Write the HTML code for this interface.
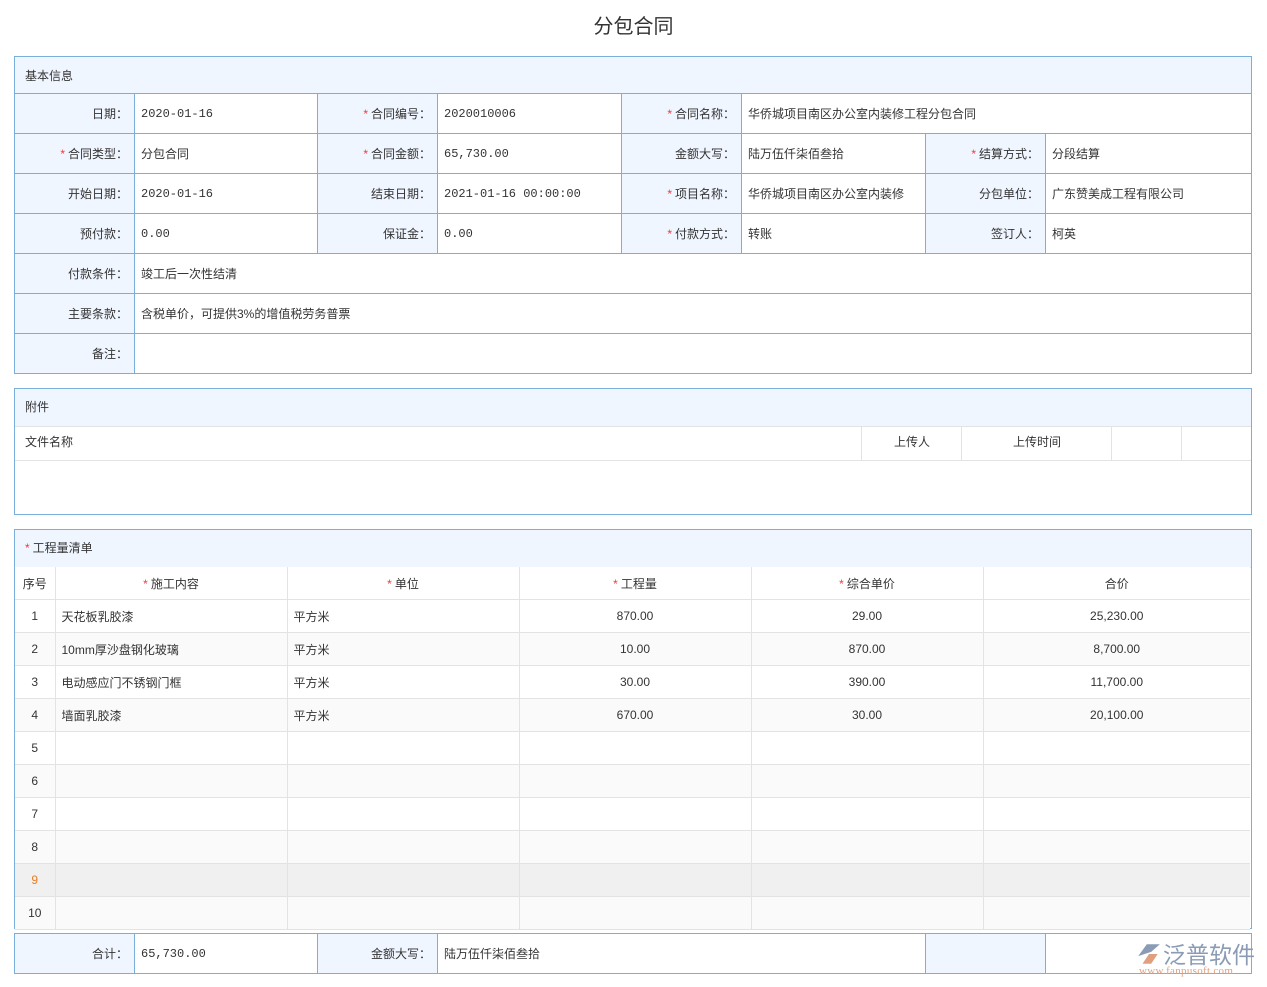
<!DOCTYPE html>
<html><head><meta charset="utf-8">
<style>
body{margin:0;background:#fff;font-family:"Liberation Sans","Noto Sans CJK SC",sans-serif;font-size:12px;color:#333;width:1267px;height:987px;position:relative;overflow:hidden}
.title{position:absolute;top:10px;left:0;width:1267px;text-align:center;font-size:20px;color:#333;font-family:"Noto Sans CJK SC",sans-serif}
table{position:absolute;left:14px;border-collapse:collapse;table-layout:fixed}
.t1 td{border:1px solid #7aaedc;height:39px;padding:0 6px;white-space:nowrap;overflow:hidden}
.t1 td.l{background:#f0f6ff;text-align:right}
.hd{background:#f0f6ff;padding-left:10px!important;text-align:left}
.r{color:#f33;margin-right:3px}
.box{position:absolute;left:14px;width:1236px;border:1px solid #7aaedc}
.t3 td{border-bottom:1px solid #e3e3e3;border-right:1px solid #e3e3e3;height:32px;padding:0 6px;text-align:center;white-space:nowrap}
.t3 tr:nth-child(odd) td{background:#fafafa}
.t3 td.n{text-align:left}
.t3 td:last-child{border-right:none}
.mono{font-family:"Liberation Mono","Noto Sans CJK SC",monospace;font-size:12px}
</style></head><body>
<div class="title">分包合同</div>

<table class="t1" style="top:56px;width:1237px">
<colgroup><col style="width:120px"><col style="width:183px"><col style="width:120px"><col style="width:184px"><col style="width:120px"><col style="width:184px"><col style="width:120px"><col style="width:206px"></colgroup>
<tr><td colspan="8" class="hd" style="height:36px">基本信息</td></tr>
<tr><td class="l">日期：</td><td class="mono">2020-01-16</td><td class="l"><span class="r">*</span>合同编号：</td><td class="mono">2020010006</td><td class="l"><span class="r">*</span>合同名称：</td><td colspan="3">华侨城项目南区办公室内装修工程分包合同</td></tr>
<tr><td class="l"><span class="r">*</span>合同类型：</td><td>分包合同</td><td class="l"><span class="r">*</span>合同金额：</td><td class="mono">65,730.00</td><td class="l">金额大写：</td><td>陆万伍仟柒佰叁拾</td><td class="l"><span class="r">*</span>结算方式：</td><td>分段结算</td></tr>
<tr><td class="l">开始日期：</td><td class="mono">2020-01-16</td><td class="l">结束日期：</td><td class="mono">2021-01-16 00:00:00</td><td class="l"><span class="r">*</span>项目名称：</td><td>华侨城项目南区办公室内装修</td><td class="l">分包单位：</td><td>广东赞美成工程有限公司</td></tr>
<tr><td class="l">预付款：</td><td class="mono">0.00</td><td class="l">保证金：</td><td class="mono">0.00</td><td class="l"><span class="r">*</span>付款方式：</td><td>转账</td><td class="l">签订人：</td><td>柯英</td></tr>
<tr><td class="l">付款条件：</td><td colspan="7">竣工后一次性结清</td></tr>
<tr><td class="l">主要条款：</td><td colspan="7">含税单价，可提供3%的增值税劳务普票</td></tr>
<tr><td class="l">备注：</td><td colspan="7"></td></tr>
</table>

<div class="box" style="top:388px;height:125px">
<div style="background:#f0f6ff;height:37px;line-height:36px;padding-left:10px;border-bottom:1px solid #e3e3e3">附件</div>
<div style="height:33px;line-height:30px;border-bottom:1px solid #e3e3e3;position:relative">
<span style="position:absolute;left:10px">文件名称</span>
<span style="position:absolute;left:846px;width:100px;height:33px;border-left:1px solid #e3e3e3;text-align:center">上传人</span>
<span style="position:absolute;left:946px;width:150px;height:33px;border-left:1px solid #e3e3e3;text-align:center">上传时间</span>
<span style="position:absolute;left:1096px;width:70px;height:33px;border-left:1px solid #e3e3e3"></span>
<span style="position:absolute;left:1166px;width:70px;height:33px;border-left:1px solid #e3e3e3"></span>
</div></div>

<div class="box" style="top:529px;height:398px">
<div style="background:#f0f6ff;height:37px;line-height:37px;padding-left:10px;border-bottom:1px solid #e3e3e3"><span class="r">*</span>工程量清单</div>
</div>
<table class="t3" style="top:567px;left:15px;width:1235px">
<colgroup><col style="width:40px"><col style="width:232px"><col style="width:232px"><col style="width:232px"><col style="width:232px"><col style="width:267px"></colgroup>
<tr><td style="background:#fff;padding:0;height:30px">序号</td><td style="background:#fff"><span class="r">*</span>施工内容</td><td style="background:#fff"><span class="r">*</span>单位</td><td style="background:#fff"><span class="r">*</span>工程量</td><td style="background:#fff"><span class="r">*</span>综合单价</td><td style="background:#fff">合价</td></tr>
<tr><td>1</td><td class="n">天花板乳胶漆</td><td class="n">平方米</td><td>870.00</td><td>29.00</td><td>25,230.00</td></tr>
<tr><td>2</td><td class="n">10mm厚沙盘钢化玻璃</td><td class="n">平方米</td><td>10.00</td><td>870.00</td><td>8,700.00</td></tr>
<tr><td>3</td><td class="n">电动感应门不锈钢门框</td><td class="n">平方米</td><td>30.00</td><td>390.00</td><td>11,700.00</td></tr>
<tr><td>4</td><td class="n">墙面乳胶漆</td><td class="n">平方米</td><td>670.00</td><td>30.00</td><td>20,100.00</td></tr>
<tr><td>5</td><td></td><td></td><td></td><td></td><td></td></tr>
<tr><td>6</td><td></td><td></td><td></td><td></td><td></td></tr>
<tr><td>7</td><td></td><td></td><td></td><td></td><td></td></tr>
<tr><td>8</td><td></td><td></td><td></td><td></td><td></td></tr>
<tr><td style="background:#f0f0f0;color:#e67e22">9</td><td style="background:#f0f0f0"></td><td style="background:#f0f0f0"></td><td style="background:#f0f0f0"></td><td style="background:#f0f0f0"></td><td style="background:#f0f0f0"></td></tr>
<tr><td>10</td><td></td><td></td><td></td><td></td><td></td></tr>
</table>

<table class="t1" style="top:933px;width:1237px">
<colgroup><col style="width:120px"><col style="width:183px"><col style="width:120px"><col style="width:488px"><col style="width:120px"><col style="width:206px"></colgroup>
<tr><td class="l">合计：</td><td class="mono">65,730.00</td><td class="l">金额大写：</td><td>陆万伍仟柒佰叁拾</td><td class="l"></td><td></td></tr>
</table>

<div style="position:absolute;left:1136px;top:940px;width:130px;height:40px">
<svg width="26" height="26" style="position:absolute;left:0;top:1px" viewBox="0 0 24 24"><path d="M2 14 L10 3 L22 3 L14 10 Z" fill="#8a9bb5"/><path d="M6 21 L12 12 L20 12 L14 21 Z" fill="#e0a080"/></svg>
<span style="position:absolute;left:27px;top:-1px;font-size:23px;color:#8a9bb5;font-family:'Noto Sans CJK SC',sans-serif;line-height:28px">泛普软件</span>
<span style="position:absolute;left:3px;top:25px;font-size:11px;color:#e0a080;font-family:'Liberation Serif',serif;letter-spacing:0.3px">www.fanpusoft.com</span>
</div>
</body></html>
